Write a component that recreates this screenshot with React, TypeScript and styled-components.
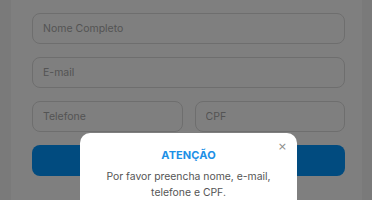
import React from 'react'
import styled, { createGlobalStyle } from 'styled-components'

const GlobalStyle = createGlobalStyle`
    html, body {
        margin: 0;
        padding: 0;
        background: #f4f4f4;
        font-family: Inter, "Noto Sans", sans-serif;
        overflow: hidden;
    }
`;

const Page = styled.div`
    padding: 0 10px 0 11px;
    height: 200px;
    box-sizing: border-box;
`;

const Card = styled.form`
    background: #ffffff;
    height: 100%;
    padding: 13px 17px 0 21px;
    box-sizing: border-box;
    display: flex;
    flex-direction: column;
    gap: 13px;
`;

const Row = styled.div`
    display: flex;
    gap: 12px;
`;

interface InputProps {
    readonly $grow?: boolean;
}
const Input = styled.input<InputProps>`
    flex: ${props => (props.$grow ? '1 1 0' : 'none')};
    min-width: 0;
    height: 31px;
    box-sizing: border-box;
    border: 1px solid #dcdcdc;
    border-radius: 8px;
    padding: 0 10px;
    font-family: Inter, "Noto Sans", sans-serif;
    font-size: 10.5px;
    color: #333;
    background: #fff;
    outline: none;
    &::placeholder {
        color: #a8a8a8;
    }
`;

const Submit = styled.button`
    height: 31px;
    flex: none;
    border: none;
    border-radius: 8px;
    background: #0396fe;
    color: #fff;
    font-family: Inter, "Noto Sans", sans-serif;
    font-weight: 600;
    font-size: 12px;
`;

const Overlay = styled.div`
    position: fixed;
    inset: 0;
    background: rgba(0, 0, 0, 0.5);
    display: flex;
    justify-content: center;
    align-items: flex-start;
    padding: 133px 0 0 5px;
    box-sizing: border-box;
`;

const Modal = styled.div`
    position: relative;
    width: 217px;
    height: 100px;
    background: #fff;
    border-radius: 10px;
    padding: 15px 16px 0;
    box-sizing: border-box;
    text-align: center;
`;

const Close = styled.button`
    position: absolute;
    top: 8px;
    right: 10px;
    border: none;
    background: none;
    padding: 0;
    font-size: 11px;
    line-height: 1;
    color: #8a8a8a;
    font-family: "DejaVu Sans", sans-serif;
`;

const Title = styled.h3`
    margin: 0 0 7px;
    font-size: 11px;
    font-weight: 700;
    color: #1c90e6;
    letter-spacing: 0.1px;
`;

const Message = styled.p`
    margin: 0;
    font-size: 10.4px;
    line-height: 15.5px;
    color: #555;
`;

export default function App() {
    return (
        <>
            <GlobalStyle />
            <Page>
                <Card onSubmit={e => e.preventDefault()}>
                    <Input placeholder="Nome Completo" />
                    <Input placeholder="E-mail" />
                    <Row>
                        <Input $grow placeholder="Telefone" />
                        <Input $grow placeholder="CPF" />
                    </Row>
                    <Submit type="submit">Enviar</Submit>
                </Card>
            </Page>
            <Overlay>
                <Modal>
                    <Close aria-label="Fechar">×</Close>
                    <Title>ATENÇÃO</Title>
                    <Message>Por favor preencha nome, e-mail,<br />telefone e CPF.</Message>
                </Modal>
            </Overlay>
        </>
    )
}
